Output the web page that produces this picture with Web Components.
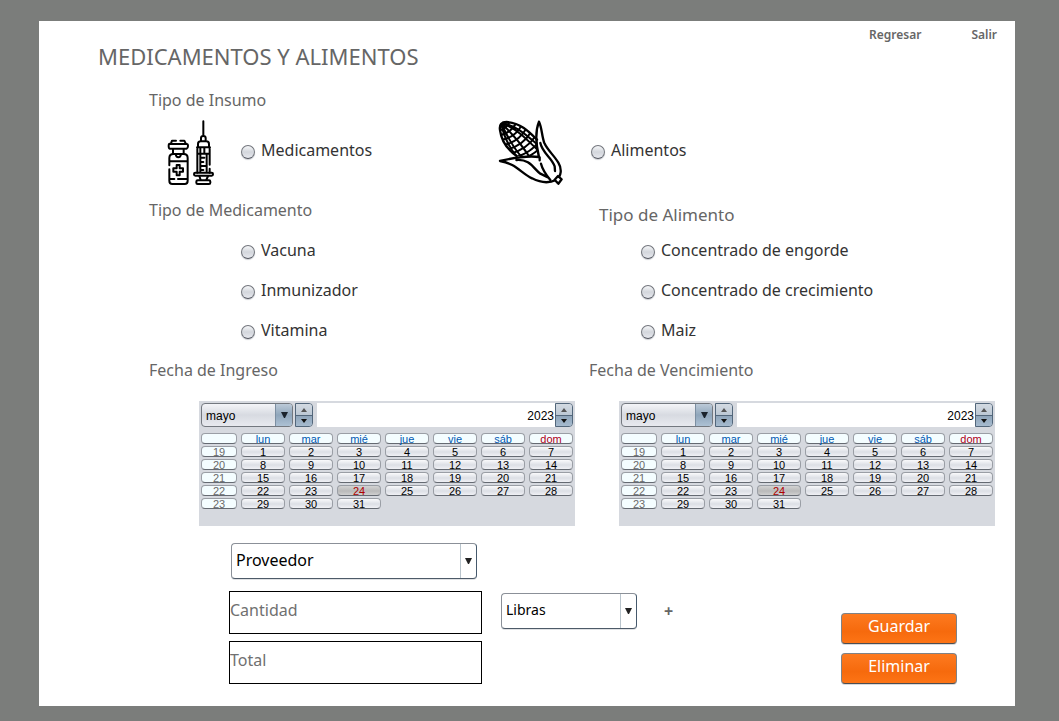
<!DOCTYPE html>
<html lang="es">
<head>
<meta charset="utf-8">
<meta name="viewport" content="width=device-width, initial-scale=1">
<title>Medicamentos y Alimentos</title>
<style>
  body {
    margin: 0;
    background: #7b7d7b;
    font: 16px/20px "Noto Sans", "Open Sans", sans-serif;
    color: #333;
    --muted: #666;
  }
</style>
</head>
<body>
<supplies-page></supplies-page>

<script>
const attach = (host, html) => {
  const t = document.createElement('template');
  t.innerHTML = html;
  host.attachShadow({ mode: 'open' }).append(t.content.cloneNode(true));
  return host.shadowRoot;
};

const radioCss = `
  label { display: flex; align-items: center; gap: 6px; height: 40px; }
  input[type=radio] {
    appearance: none; box-sizing: border-box; width: 14px; height: 14px; margin: 4px 0 0;
    border: 1px solid #73767d; border-bottom-color: #4f535b; border-radius: 50%;
    background: linear-gradient(#f6f7f9, #d3d6dc 50%, #e6e8ee);
    box-shadow: 0 1px 1px #c9ccd2;
  }
  input[type=radio]:checked { background: radial-gradient(#333 3px, #dfe2e8 4px); }
`;

/* Page heading plus slotted navigation links */
customElements.define('page-header', class extends HTMLElement {
  constructor() {
    super();
    attach(this, `
      <style>
        :host { display: flex; justify-content: space-between; align-items: flex-start; padding: 5px 18px 0 59px; color: var(--muted); }
        h1 { margin: 15px 0 2px; font-size: 22px; line-height: 30px; font-weight: 400; }
        nav { display: flex; gap: 50px; }
      </style>
      <h1><slot></slot></h1>
      <nav><slot name="link"></slot></nav>`);
  }
});

/* Vertical list of radio buttons sharing one name */
customElements.define('option-list', class extends HTMLElement {
  constructor() {
    super();
    const name = this.getAttribute('name');
    const items = this.getAttribute('options').split('|');
    attach(this, `
      <style>
        :host { display: block; }
        ${radioCss}
      </style>
      ${items.map(t => `<label><input type="radio" name="${name}" value="${t}"><span>${t}</span></label>`).join('')}`);
  }
});

/* Choice between medicine and food, each with its picture */
customElements.define('supply-type', class extends HTMLElement {
  constructor() {
    super();
    attach(this, `
      <style>
        :host { display: grid; grid-template-columns: 349fr 497fr; }
        div { display: flex; align-items: flex-start; }
        .med { padding-left: 17px; gap: 25px; }
        .food { gap: 27px; }
        label { margin-top: 10px; }
        svg { fill: none; stroke: #000; stroke-width: 6; stroke-linecap: round; stroke-linejoin: round; flex: none; }
        .food svg { stroke-width: 7; }
        ${radioCss}
      </style>
      <div class="med">
        <svg width="50" height="66" viewBox="48 30 150 198" aria-hidden="true">
          <path d="M63 100L66 92H78M91 92H103L107 100M60 102H110Q114 102 114 108T110 116H60Q56 116 56 108T60 102M69 117V130M101 117V130M77 132Q78 142 85 142T93 132"/>
          <path d="M58 166V144Q58 132 70 132H101Q113 132 113 144V212Q113 222 104 222H67Q58 222 58 212V178M58 154H113M58 207H73M84 207H113"/>
          <path d="M80 165H89V175H99V185H89V196H80V185H70V175H80Z"/>
          <path d="M160 34V78M153 93V84Q153 78 160 78T167 84V93M144 112V102Q144 94 152 94H169Q177 94 177 102V112M141 112H180M142 112V188M179 112V164M179 176V188M142 131H179M151 114V130M163 114V130M151 133V185M163 143H152M170 134V184M160 156H152M166 168H152M160 180H152"/>
          <rect x="132" y="188" width="57" height="9" rx="4"/>
          <path d="M148 198L152 210M174 198L169 210"/>
          <rect x="139" y="211" width="42" height="11" rx="4"/>
        </svg>
        <label><input type="radio" name="supply" value="med"><span>Medicamentos</span></label>
      </div>
      <div class="food">
        <svg width="66" height="66" viewBox="24 30 198 198" aria-hidden="true">
          <clipPath id="cob"><path d="M30 60Q26 36 50 36C92 38 120 68 141 89L146 138L80 138C48 116 34 92 30 60Z"/></clipPath>
          <path d="M30 60Q26 36 50 36C92 38 120 68 141 89M30 60C34 92 48 116 80 138"/>
          <g clip-path="url(#cob)" stroke-width="6">
            <path d="M33 39C50 76 68 112 96 142M33 39C64 68 92 98 120 143M33 39C82 56 110 88 143 120M33 39C42 84 60 116 84 145M33 39C76 44 110 76 145 106"/>
            <path d="M27 61Q45 61 60 34M30 76Q62 70 80 37M33 90Q76 83 96 44M42 105Q86 96 110 54M50 119Q99 107 123 66M60 132Q111 118 136 79M76 142Q124 128 147 94M101 144Q133 135 150 112"/>
          </g>
          <path d="M147 35C137 60 136 96 147 141C110 136 68 144 30 153C76 160 93 189 126 205C151 218 176 221 198 210C215 199 216 176 205 158C192 136 173 121 163 99C155 78 156 53 147 35Z"/>
          <path d="M79 150C120 146 132 178 151 191L174 202M151 99C157 129 185 142 194 169L195 183M149 142V151M153 161C158 181 168 194 181 210"/>
          <path d="M194 209L204 198L215 208L205 221Z" fill="#fff"/>
        </svg>
        <label><input type="radio" name="supply" value="food"><span>Alimentos</span></label>
      </div>`);
  }
});

/* Month calendar with month drop-down, year box and day buttons */
customElements.define('month-calendar', class extends HTMLElement {
  constructor() {
    super();
    const months = ['mayo','enero','febrero','marzo','abril','junio','julio','agosto','septiembre','octubre','noviembre','diciembre'];
    const days = ['lun','mar','mié','jue','vie','sáb','dom'];
    const rows = [19,20,21,22,23].map((w, r) => {
      const cells = days.map((_, c) => {
        const d = r * 7 + c + 1;
        return `<td>${d > 31 ? '' : `<button type="button"${d === 24 ? ' class="today"' : ''}>${d}</button>`}</td>`;
      }).join('');
      return `<tr><th scope="row"><span class="week">${w}</span></th>${cells}</tr>`;
    }).join('');
    const spinner = (what) => `
      <div class="spin">
        <button type="button" aria-label="Aumentar ${what}"><svg width="6" height="4"><path d="M3 0L6 4H0Z" fill="#555"/></svg></button>
        <button type="button" aria-label="Disminuir ${what}"><svg width="6" height="4"><path d="M0 0H6L3 4Z" fill="#111"/></svg></button>
      </div>`;
    attach(this, `
      <style>
        :host { display: block; box-sizing: border-box; height: 125px; padding-top: 2px; background: #d6d9df; font: 12px/16px "Liberation Sans", Arial, sans-serif; color: #000; }
        .bar { display: flex; height: 24px; margin: 0 2px 5px; }
        .month { display: grid; width: 92px; margin-right: 2px; box-sizing: border-box; border: 1px solid #73787f; border-radius: 4px; overflow: hidden; background: linear-gradient(#f4f5f8, #d7dae1 50%, #e8eaef); }
        .month > * { grid-area: 1 / 1; }
        select { appearance: none; border: 0; margin: 0; padding: 1px 20px 0 4px; background: none; font: inherit; color: inherit; }
        .arrow { justify-self: end; width: 16px; display: grid; place-items: center; pointer-events: none; background: linear-gradient(#bccad8, #8fa6bb 50%, #adc1d4); border-left: 1px solid #7c8fa2; }
        .spin { display: grid; grid-template-rows: 1fr 1fr; width: 18px; box-sizing: border-box; border: 1px solid #53677b; border-radius: 0 4px 4px 0; overflow: hidden; }
        .spin button { border: 0; margin: 0; padding: 0; display: grid; place-items: center; background: linear-gradient(#d3dae2, #bcc8d4); }
        .spin button + button { border-top: 1px solid #53677b; background: linear-gradient(#8fa5ba, #a6bbcf); }
        .year { flex: 1; min-width: 0; margin: 0 0 0 4px; padding: 1px 1px 0 0; border: 0; background: #fff; text-align: right; font: inherit; color: inherit; }
        table { width: 100%; table-layout: fixed; border-collapse: collapse; font-size: 11px; line-height: 11px; }
        tr { height: 13px; }
        th, td { padding: 0 2px; height: 13px; font-weight: 400; vertical-align: middle; }
        col.wk { width: 40px; }
        td button, th span {
          display: block; box-sizing: border-box; width: 100%; height: 11px; margin: 0; padding: 0;
          border: 1px solid #9a9ea5; border-bottom-color: #656a72; border-radius: 4px;
          font: inherit; line-height: 11px; text-align: center; color: #000;
          background: linear-gradient(#fafafc, #dcdfe5 55%, #f0f1f5);
        }
        th span { background: #f4fdff; color: #0059b3; }
        th span.week { color: #6b6b6b; }
        th span.sun { color: #b00020; }
        td button.today { background: linear-gradient(#d3d3d3, #b9b9b9 55%, #cfcfcf); color: #b00000; }
      </style>
      <div class="bar">
        <div class="month">
          <select aria-label="Mes">${months.map(m => `<option>${m}</option>`).join('')}</select>
          <span class="arrow"><svg width="7" height="6"><path d="M0 0H7L4 6H3Z" fill="#1a232c"/></svg></span>
        </div>
        ${spinner('mes')}
        <input class="year" aria-label="Año" value="2023">
        ${spinner('año')}
      </div>
      <table>
        <colgroup><col class="wk"><col span="7"></colgroup>
        <thead><tr><th><span></span></th>${days.map((d, i) => `<th scope="col"><span${i === 6 ? ' class="sun"' : ''}>${d}</span></th>`).join('')}</tr></thead>
        <tbody>${rows}</tbody>
      </table>`);
  }
});

/* Drop-down with a separated arrow compartment */
customElements.define('combo-box', class extends HTMLElement {
  constructor() {
    super();
    attach(this, `
      <style>
        :host { display: grid; box-sizing: border-box; height: 36px; border: 1px solid #8b9098; border-bottom-color: #4d5a68; border-right-color: #45596c; border-radius: 4px; overflow: hidden; background: #fff; color: #000; box-shadow: 0 1px 0 #dfe1e4; }
        select, .arrow { grid-area: 1 / 1; }
        select { appearance: none; margin: 0; border: 0; padding: 0 20px 3px 4px; background: none; font: inherit; color: inherit; }
        .arrow { justify-self: end; width: 15px; display: grid; place-items: center; border-left: 1px solid #b9c4cc; pointer-events: none; }
      </style>
      <select aria-label="${this.getAttribute('label')}">${this.getAttribute('options').split('|').map(o => `<option>${o}</option>`).join('')}</select>
      <span class="arrow"><svg width="7" height="6"><path d="M0 0H7L4 6H3Z" fill="#222"/></svg></span>`);
  }
});

customElements.define('text-field', class extends HTMLElement {
  constructor() {
    super();
    const label = this.getAttribute('label');
    attach(this, `
      <style>
        :host { display: block; }
        input { display: block; box-sizing: border-box; width: 100%; height: 43px; margin: 0; padding: 0 0 5px; border: 1px solid #000; background: #fff; font: inherit; color: #333; outline: 0; }
        input::placeholder { color: #707070; opacity: 1; }
      </style>
      <input aria-label="${label}" placeholder="${label}">`);
  }
});

customElements.define('action-button', class extends HTMLElement {
  constructor() {
    super();
    attach(this, `
      <style>
        :host { display: block; }
        button { display: block; box-sizing: border-box; width: 100%; height: 31px; margin: 0; padding: 0 0 5px; border: 1px solid #7f8286; border-bottom-color: #4b4d52; border-radius: 4px; background: linear-gradient(#fd7a20, #f66a0d 60%, #fd7415); font: inherit; color: #fff; box-shadow: 0 1px 0 #d9d9d9; }
      </style>
      <button type="button"><slot></slot></button>`);
  }
});

customElements.define('supplies-page', class extends HTMLElement {
  constructor() {
    super();
    attach(this, `
      <style>
        :host { display: block; padding: 21px 44px 15px 39px; }
        main { background: #fff; min-height: calc(100vh - 36px); }
        a { color: var(--muted); font-size: 12px; font-weight: 600; line-height: 18px; text-decoration: none; }
        h2 { margin: 0; font-size: 16px; line-height: 20px; font-weight: 400; color: var(--muted); }
        .body { padding: 17px 20px 0 110px; }
        supply-type { margin: 10px 0 14px; }
        .pair { display: grid; grid-template-columns: 426fr 406fr; gap: 0 14px; }
        .pair option-list { margin: 10px 0; padding-left: 92px; }
        .food { padding-left: 10px; }
        .food h2 { font-size: 17px; padding-top: 5px; }
        .food option-list { margin-top: 5px; padding-left: 42px; }
        .left { padding-left: 50px; }
        .right { padding-left: 30px; }
        month-calendar { margin-top: 21px; }
        form { display: grid; grid-template-columns: 253px 136px 1fr 116px; column-gap: 19px; padding: 17px 58px 22px 190px; }
        .fields { display: grid; gap: 7px; }
        .provider { margin: 0 5px 5px 2px; }
        .unit { margin-top: 50px; font-size: 14px; }
        .add { justify-self: start; align-self: start; margin: 58px 0 0; padding: 0 8px; border: 0; background: none; font: 700 16px/20px "Noto Sans", sans-serif; color: var(--muted); }
        .actions { display: grid; gap: 9px; align-self: end; }
      </style>
      <main>
        <page-header>MEDICAMENTOS Y ALIMENTOS
          <a slot="link" href="#regresar">Regresar</a>
          <a slot="link" href="#salir">Salir</a>
        </page-header>
        <div class="body">
          <h2>Tipo de Insumo</h2>
          <supply-type></supply-type>
          <div class="pair">
            <section>
              <h2>Tipo de Medicamento</h2>
              <option-list name="medicine" options="Vacuna|Inmunizador|Vitamina"></option-list>
            </section>
            <section class="food">
              <h2>Tipo de Alimento</h2>
              <option-list name="food" options="Concentrado de engorde|Concentrado de crecimiento|Maiz"></option-list>
            </section>
          </div>
          <div class="pair">
            <section>
              <h2>Fecha de Ingreso</h2>
              <div class="left"><month-calendar></month-calendar></div>
            </section>
            <section>
              <h2>Fecha de Vencimiento</h2>
              <div class="right"><month-calendar></month-calendar></div>
            </section>
          </div>
        </div>
        <form>
          <div class="fields">
            <combo-box class="provider" label="Proveedor" options="Proveedor"></combo-box>
            <text-field label="Cantidad"></text-field>
            <text-field label="Total"></text-field>
          </div>
          <combo-box class="unit" label="Unidad" options="Libras"></combo-box>
          <button class="add" type="button">+</button>
          <div class="actions">
            <action-button>Guardar</action-button>
            <action-button>Eliminar</action-button>
          </div>
        </form>
      </main>`);
  }
});
</script>
</body>
</html>
